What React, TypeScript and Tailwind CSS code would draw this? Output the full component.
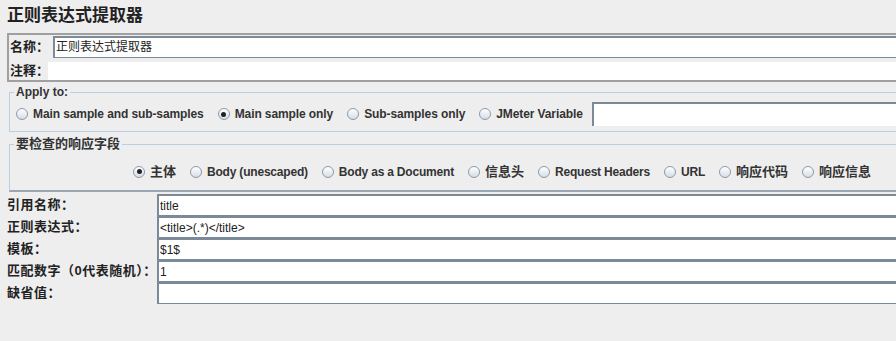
import React from 'react'

const cjk = "font-['Liberation_Sans','Noto_Sans_CJK_SC',sans-serif]"

function Radio({ label, checked, zh, tight }: { label: string; checked?: boolean; zh?: boolean; tight?: boolean }) {
  const en = tight ? 'text-[12px] tracking-[-0.2px]' : 'text-[12px] tracking-[-0.1px]'
  return (
    <div className="flex items-center gap-[5px] shrink-0">
      <span className="w-[12px] h-[12px] rounded-full border border-[#8c9aa8] bg-gradient-to-b from-white to-[#d5dde6] flex items-center justify-center">
        {checked && <span className="w-[5px] h-[5px] rounded-full bg-[#222]" />}
      </span>
      <span className={`${zh ? 'text-[13px]' : en} font-bold text-[#333] whitespace-nowrap`}>{label}</span>
    </div>
  )
}

function Field({ value, className = '' }: { value?: string; className?: string }) {
  return (
    <div className={`h-[22px] bg-white border-t-2 border-l-2 border-b border-[#7a8a99] flex items-center pl-[1px] text-[12px] text-[#222] ${className}`}>
      {value}
    </div>
  )
}

export default function App() {
  return (
    <div className={`w-[896px] h-[341px] overflow-hidden bg-[#eeeeee] ${cjk}`}>
      <div className="w-[1100px]">
        {/* Title */}
        <div className="h-[33px] pl-[7px] pt-[5px] text-[17px] font-semibold text-[#222] leading-[22px]">正则表达式提取器</div>

        {/* Name / comment */}
        <div className="ml-[7px] border-t-2 border-l-2 border-b-2 border-[#a0a0a0] h-[49px] flex flex-col">
          <div className="flex items-center h-[23px]">
            <span className="w-[44px] shrink-0 pl-[1px] text-[13px] font-bold text-[#222] whitespace-nowrap">名称：</span>
            <Field value="正则表达式提取器" className="flex-1" />
          </div>
          <div className="flex items-center mt-[4px] h-[18px]">
            <span className="w-[39px] shrink-0 pl-[1px] text-[13px] font-bold text-[#222] whitespace-nowrap">注释：</span>
            <div className="flex-1 h-[18px] bg-white" />
          </div>
        </div>

        {/* Apply to */}
        <div className="relative ml-[9px] mt-[10px] border border-[#b8cfe5] h-[40px] flex items-center pl-[6px] gap-[14px] pt-[4px]">
          <span className="absolute left-[4px] -top-[9px] px-[2px] bg-[#eeeeee] text-[12px] font-bold text-[#333] leading-[16px]">Apply to:</span>
          <Radio label="Main sample and sub-samples" />
          <Radio label="Main sample only" checked />
          <Radio label="Sub-samples only" />
          <Radio label="JMeter Variable" />
          <div className="-ml-[5px] w-[400px] h-[24px] bg-white border-t-2 border-l-2 border-[#7a8a99]" />
        </div>

        {/* Field to check */}
        <div className="relative ml-[9px] mt-[12px] w-[1000px] border border-[#b8cfe5] border-b-[#9aa6b2] border-b-2 h-[48px] flex items-center pl-[123px] gap-[14px] pt-[8px]">
          <span className="absolute left-[4px] -top-[10px] px-[2px] bg-[#eeeeee] text-[13px] font-bold text-[#333] leading-[18px]">要检查的响应字段</span>
          <Radio label="主体" checked zh />
          <Radio label="Body (unescaped)" tight />
          <Radio label="Body as a Document" tight />
          <Radio label="信息头" zh />
          <Radio label="Request Headers" tight />
          <Radio label="URL" tight />
          <Radio label="响应代码" zh />
          <Radio label="响应信息" zh />
        </div>

        {/* Form rows */}
        <div className="mt-[2px] flex flex-col">
          {[
            ['引用名称：', 'title'],
            ['正则表达式：', '<title>(.*)</title>'],
            ['模板：', '$1$'],
            ['匹配数字（0代表随机）：', '1'],
            ['缺省值：', ''],
          ].map(([label, value]) => (
            <div key={label} className="flex items-center h-[22px]">
              <span className="w-[157px] shrink-0 pl-[7px] text-[13px] font-bold text-[#222] whitespace-nowrap tracking-[0.5px]">{label}</span>
              <Field value={value} className="flex-1" />
            </div>
          ))}
        </div>
      </div>
    </div>
  )
}
